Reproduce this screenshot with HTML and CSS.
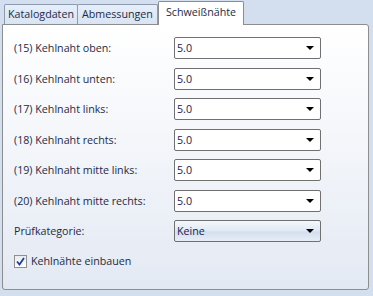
FILE: index.html
```html
<!DOCTYPE html>
<html lang="de">
<head>
    <meta charset="UTF-8">
    <title>Schweißnähte</title>
    <link rel="stylesheet" href="styles.css">
</head>
<body>
    <div class="window">
        <div class="tabs">
            <div class="tab tab-katalog">Katalogdaten</div>
            <div class="tab tab-abmess">Abmessungen</div>
            <div class="tab tab-naht active">Schweißnähte</div>
        </div>
        <div class="panel">
            <div class="row">
                <span class="label">(15) Kehlnaht oben:</span>
                <div class="combo"><span>5.0</span><span class="arrow"></span></div>
            </div>
            <div class="row">
                <span class="label">(16) Kehlnaht unten:</span>
                <div class="combo"><span>5.0</span><span class="arrow"></span></div>
            </div>
            <div class="row">
                <span class="label">(17) Kehlnaht links:</span>
                <div class="combo"><span>5.0</span><span class="arrow"></span></div>
            </div>
            <div class="row">
                <span class="label">(18) Kehlnaht rechts:</span>
                <div class="combo"><span>5.0</span><span class="arrow"></span></div>
            </div>
            <div class="row">
                <span class="label">(19) Kehlnaht mitte links:</span>
                <div class="combo"><span>5.0</span><span class="arrow"></span></div>
            </div>
            <div class="row">
                <span class="label">(20) Kehlnaht mitte rechts:</span>
                <div class="combo"><span>5.0</span><span class="arrow"></span></div>
            </div>
            <div class="row">
                <span class="label">Prüfkategorie:</span>
                <div class="combo button"><span>Keine</span><span class="arrow"></span></div>
            </div>
            <label class="check">
                <span class="box">
                    <svg width="9" height="9" viewBox="0 0 9 9"><path d="M1 4.5 L3.5 7.5 L8 1" fill="none" stroke="#1c3e9c" stroke-width="1.8"/></svg>
                </span>
                Kehlnähte einbauen
            </label>
        </div>
    </div>
</body>
</html>
```

FILE: styles.css
```css
body {
    margin: 0;
    font-family: "Open Sans", sans-serif;
    font-size: 10.7px;
    color: #1e2b45;
    background-color: #d3dfee;
}

.window {
    width: 373px;
    height: 296px;
    padding: 1px 4px 0 2px;
    box-sizing: border-box;
}

.tabs {
    display: flex;
    align-items: flex-end;
    height: 23px;
    padding-left: 2px;
}

.tab {
    box-sizing: border-box;
    height: 20px;
    line-height: 18px;
    text-align: center;
    white-space: nowrap;
    border: 1px solid #8c9bb0;
    border-bottom: none;
    background: linear-gradient(#e6eefa, #d8e4f5);
    border-radius: 2px 2px 0 0;
}

.tab-katalog {
    width: 74px;
}

.tab-abmess {
    width: 81px;
    margin-left: -1px;
}

.tab-naht {
    width: 86px;
}

.tab.active {
    height: 24px;
    line-height: 20px;
    background: #ffffff;
    border-color: #8d8d8d;
    margin-bottom: -1px;
    position: relative;
    z-index: 1;
}

.panel {
    height: 266px;
    box-sizing: border-box;
    border: 1px solid #8d8d8d;
    border-radius: 0 3px 3px 3px;
    background: linear-gradient(#ffffff 0%, #f5f7fb 40%, #e3e9f3 100%);
    padding: 12px 0 0 11px;
}

.row {
    display: flex;
    align-items: center;
    height: 22px;
    margin-bottom: 8.5px;
}

.label {
    width: 160px;
}

.combo {
    box-sizing: border-box;
    width: 147px;
    height: 22px;
    border: 1px solid #707070;
    border-radius: 2px;
    background: #ffffff;
    display: flex;
    align-items: center;
    justify-content: space-between;
    padding: 0 4px 0 2px;
    color: #1a2050;
}

.combo.button {
    background: linear-gradient(#f4f7fc 0%, #e3ebf6 45%, #d4e0ef 55%, #e6edf7 100%);
}

.arrow {
    width: 0;
    height: 0;
    border-left: 4px solid transparent;
    border-right: 4px solid transparent;
    border-top: 4px solid #000000;
    margin-right: 2px;
}

.check {
    display: flex;
    align-items: center;
    gap: 4px;
    margin-top: 12px;
}

.box {
    width: 11px;
    height: 11px;
    border: 1px solid #8e8f8f;
    background: linear-gradient(#e9ecf0, #ffffff);
    display: flex;
    align-items: center;
    justify-content: center;
}
```
